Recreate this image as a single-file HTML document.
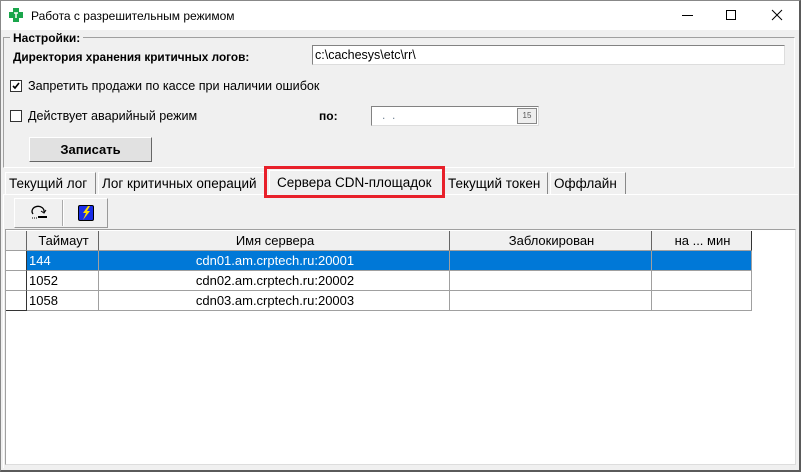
<!DOCTYPE html>
<html><head><meta charset="utf-8"><style>
*{margin:0;padding:0;box-sizing:border-box}
body{width:801px;height:472px;background:#f0f0f0;font-family:"Liberation Sans","DejaVu Sans",sans-serif;font-size:12px;color:#000;position:relative;overflow:hidden}
.a{position:absolute;white-space:nowrap}
.win{position:absolute;left:0;top:0;width:801px;height:472px;border-right:2px solid #5a5a5a;border-bottom:2px solid #5a5a5a;border-left:1px solid #888;border-top:1px solid #888}
.tab{position:absolute;top:172px;height:22px;border:1px solid #fff;border-right:1px solid #888;border-bottom:none;font-size:13.5px;padding:3px 2px 0 3px;background:#f0f0f0;white-space:nowrap;overflow:hidden}
.cell{position:absolute;height:20px;border-right:1px solid #a0a0a0;border-bottom:1px solid #a0a0a0;font-size:13px;line-height:19px;padding-left:2px;white-space:nowrap}
</style></head><body>
<div class="a" style="left:0;top:0;width:801px;height:30px;background:#fff"></div>
<svg class="a" style="left:8px;top:7px" width="16" height="16"><path d="M5 1h6v4h4v6h-4v4H5v-4H1V5h4z" fill="#1aa64b"/><path d="M6 6h4M8 6v5" stroke="#fff" stroke-width="1.5"/></svg>
<div class="a" style="left:31px;top:9px;font-size:12px">Работа с разрешительным режимом</div>
<div class="a" style="left:682px;top:15px;width:11px;height:1px;background:#000"></div>
<div class="a" style="left:726px;top:10px;width:10px;height:10px;border:1px solid #000"></div>
<svg class="a" style="left:771px;top:9px" width="12" height="12"><path d="M1 1L11 11M11 1L1 11" stroke="#000"/></svg>

<div class="a" style="left:3px;top:37px;width:792px;height:131px;border:1px solid #a0a0a0;border-right-color:#fff;border-bottom-color:#fff"></div>
<div class="a" style="left:10px;top:31px;padding:0 3px;background:#f0f0f0;font-weight:bold">Настройки:</div>
<div class="a" style="left:13px;top:50px;font-weight:bold;font-size:11.8px">Директория хранения критичных логов:</div>
<div class="a" style="left:312px;top:45px;width:473px;height:20px;background:#fff;border:1px solid #828282;border-right-color:#ddd;border-bottom-color:#ddd;font-size:12.5px;padding:2px 2px">c:\cachesys\etc\rr\</div>
<div class="a" style="left:10px;top:80px;width:12px;height:12px;background:#fff;border:1px solid #333"></div>
<svg class="a" style="left:11px;top:81px" width="10" height="10"><path d="M2 5l2 2 4-5" stroke="#000" stroke-width="1.6" fill="none"/></svg>
<div class="a" style="left:28px;top:79px;font-size:12.6px">Запретить продажи по кассе при наличии ошибок</div>
<div class="a" style="left:10px;top:110px;width:12px;height:12px;background:#fff;border:1px solid #333"></div>
<div class="a" style="left:28px;top:109px;font-size:12.6px">Действует аварийный режим</div>
<div class="a" style="left:319px;top:109px;font-weight:bold">по:</div>
<div class="a" style="left:371px;top:106px;width:168px;height:20px;background:#fff;border:1px solid #828282;border-right-color:#ddd;border-bottom-color:#ddd"></div>
<div class="a" style="left:382px;top:108px;color:#789">. &nbsp;.</div>
<div class="a" style="left:517px;top:108px;width:20px;height:16px;border:1px solid #888;background:#eee;font-size:8px;text-align:center;line-height:14px;color:#555">15</div>
<div class="a" style="left:29px;top:137px;width:123px;height:25px;background:#e1e1e1;border:1px solid #fff;border-right-color:#666;border-bottom-color:#666;font-weight:bold;font-size:13px;text-align:center;line-height:23px">Записать</div>

<div class="a" style="left:3px;top:194px;width:795px;height:274px;border-top:1px solid #fff;border-left:1px solid #fff"></div>
<div class="tab" style="left:5px;width:91px">Текущий лог</div>
<div class="tab" style="left:98px;width:168px">Лог критичных операций</div>
<div class="tab" style="left:269px;top:170px;height:25px;width:174px;padding-left:7px;padding-top:4px">Сервера CDN-площадок</div>
<div class="tab" style="left:444px;width:104px">Текущий токен</div>
<div class="tab" style="left:550px;width:76px">Оффлайн</div>
<div class="a" style="left:264px;top:166px;width:181px;height:32px;border:3px solid #e8202a"></div>

<div class="a" style="left:14px;top:198px;width:94px;height:30px;border:1px solid #fff;border-right-color:#999;border-bottom-color:#999"></div>
<div class="a" style="left:62px;top:200px;width:2px;height:26px;border-left:1px solid #aaa;border-right:1px solid #fff"></div>
<svg class="a" style="left:30px;top:204px" width="20" height="18"><path d="M3 10 A6 5 0 1 1 14 8" stroke="#000" fill="none" stroke-width="1.3"/><path d="M11 7l3 2 2-3" stroke="#000" fill="none"/><path d="M8 13h9" stroke="#000" stroke-width="2"/><path d="M2 14h5" stroke="#000" stroke-dasharray="1 1"/></svg>
<div class="a" style="left:78px;top:205px;width:16px;height:16px;background:#1a2ee8;border:1px solid #000;border-radius:2px"></div>
<svg class="a" style="left:78px;top:205px" width="16" height="16"><path d="M10 1L5 8h3l-3 7 7-9H9l3-5z" fill="#ffe000"/></svg>

<div class="a" style="left:5px;top:229px;width:791px;height:236px;background:#fff;border:1px solid #a0a0a0;border-right-color:#ddd;border-bottom-color:#ddd"></div>
<div class="cell" style="left:6px;top:231px;width:21px;background:#f0f0f0;border-right-color:#666"></div>
<div class="cell" style="left:27px;top:231px;width:72px;background:#f0f0f0;text-align:center;border-right-color:#666">Таймаут</div>
<div class="cell" style="left:99px;top:231px;width:351px;background:#f0f0f0;text-align:center;border-right-color:#666">Имя сервера</div>
<div class="cell" style="left:450px;top:231px;width:202px;background:#f0f0f0;text-align:center;border-right-color:#666">Заблокирован</div>
<div class="cell" style="left:652px;top:231px;width:100px;background:#f0f0f0;text-align:center;border-right-color:#333">на ... мин</div>
<div class="cell" style="left:6px;top:251px;width:21px;border-right-color:#333"></div>
<div class="cell" style="left:27px;top:251px;width:72px;background:#0078d7;color:#fff">144</div>
<div class="cell" style="left:99px;top:251px;width:351px;background:#0078d7;color:#fff;text-align:center">cdn01.am.crptech.ru:20001</div>
<div class="cell" style="left:450px;top:251px;width:202px;background:#0078d7"></div>
<div class="cell" style="left:652px;top:251px;width:100px;background:#0078d7"></div>
<div class="cell" style="left:6px;top:271px;width:21px;border-right-color:#333"></div>
<div class="cell" style="left:27px;top:271px;width:72px">1052</div>
<div class="cell" style="left:99px;top:271px;width:351px;text-align:center">cdn02.am.crptech.ru:20002</div>
<div class="cell" style="left:450px;top:271px;width:202px"></div>
<div class="cell" style="left:652px;top:271px;width:100px"></div>
<div class="cell" style="left:6px;top:291px;width:21px;border-right-color:#333;border-bottom-color:#333"></div>
<div class="cell" style="left:27px;top:291px;width:72px">1058</div>
<div class="cell" style="left:99px;top:291px;width:351px;text-align:center">cdn03.am.crptech.ru:20003</div>
<div class="cell" style="left:450px;top:291px;width:202px"></div>
<div class="cell" style="left:652px;top:291px;width:100px"></div>
<div class="win"></div>
</body></html>
